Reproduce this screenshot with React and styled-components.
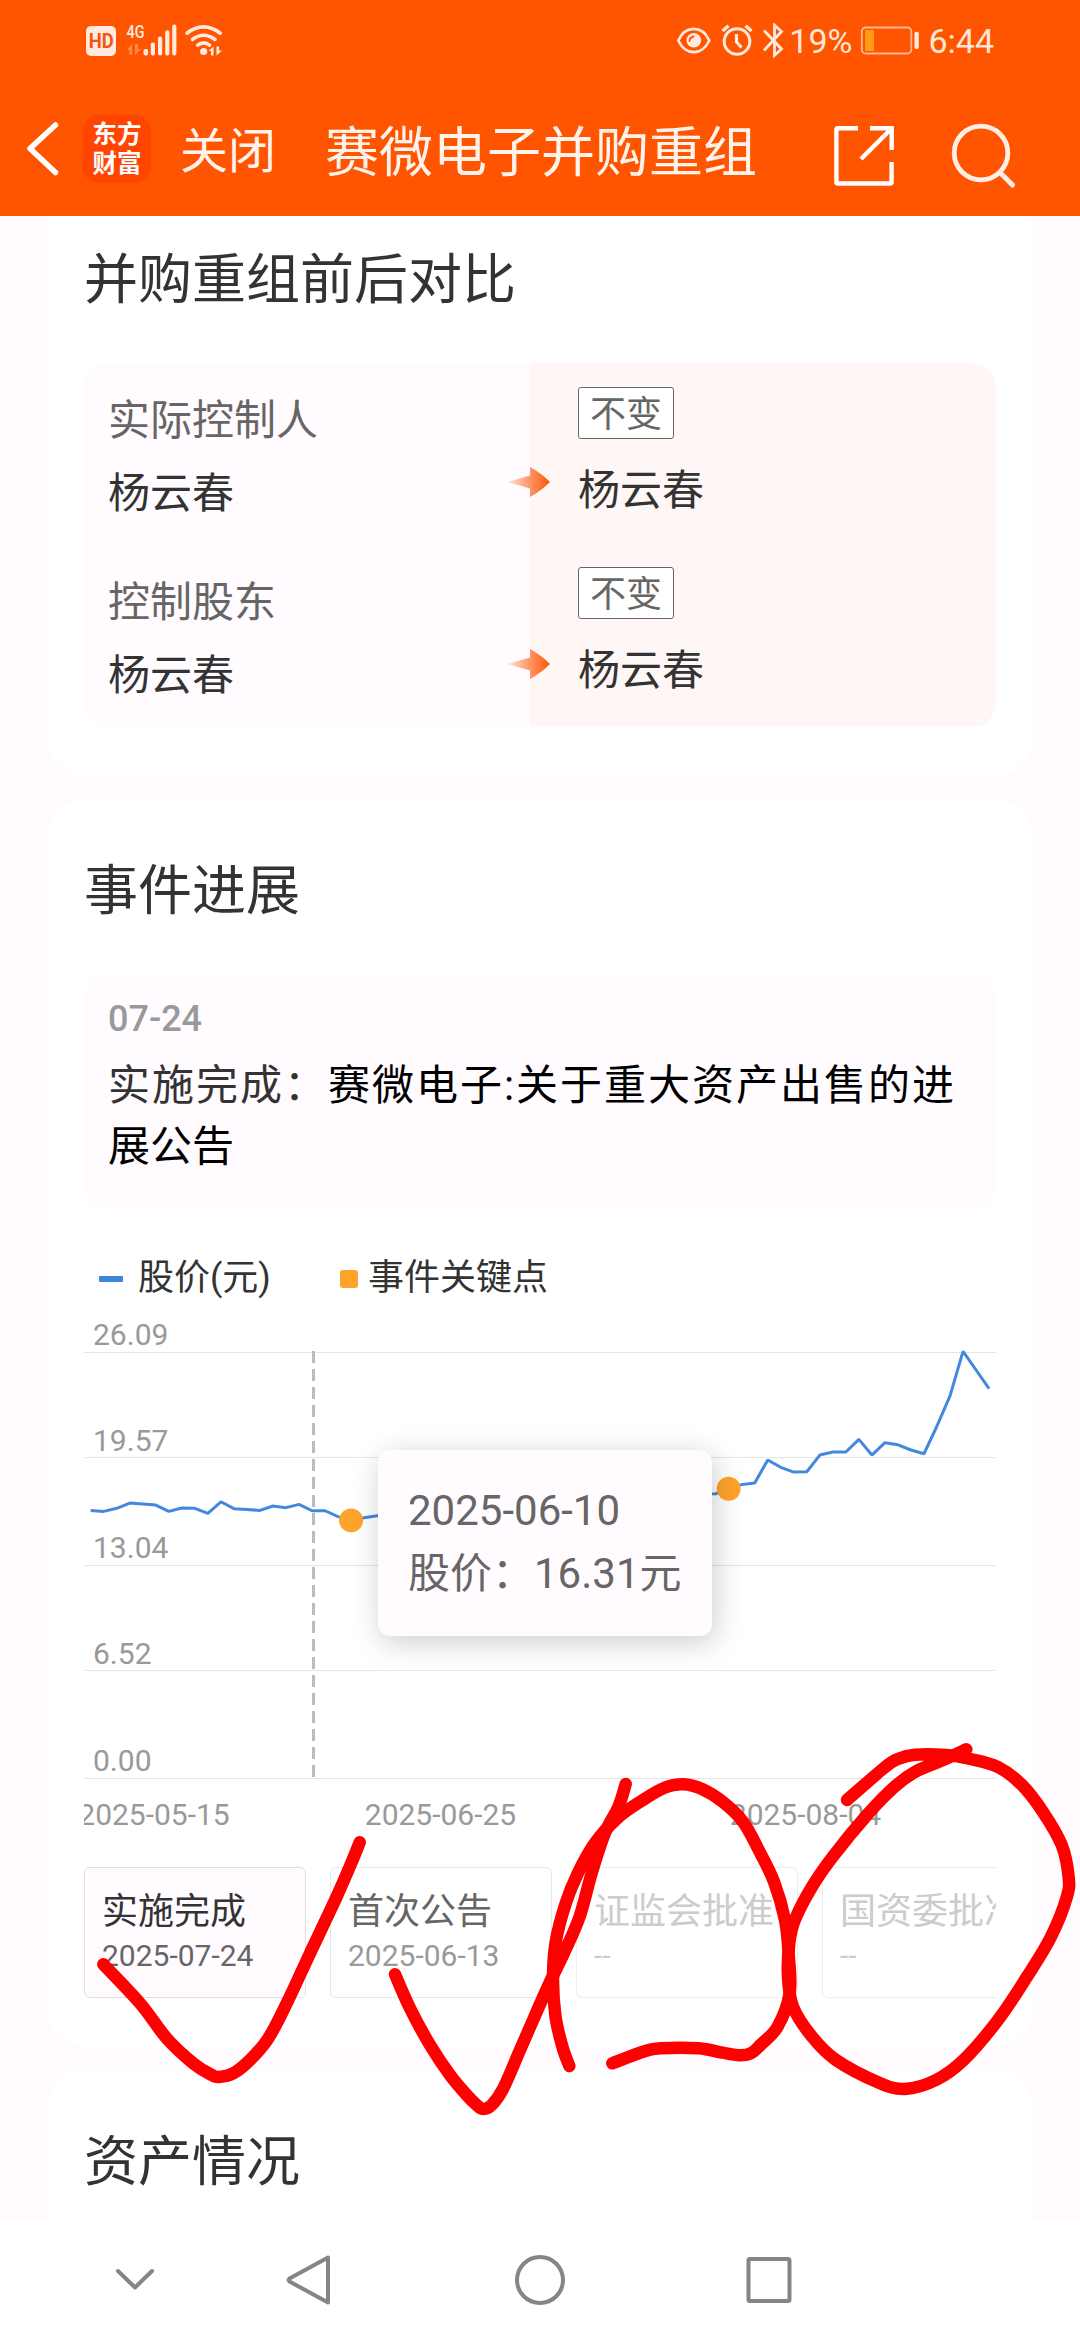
import React from "react";
import styled, { createGlobalStyle } from "styled-components";

// daily close, one entry per trading day from 05-15
const prices = [
  16.41, 16.35, 16.54, 16.86, 16.8, 16.74, 16.35, 16.56, 16.54, 16.23, 16.94,
  16.52, 16.47, 16.41, 16.68, 16.58, 16.78, 16.39, 16.39, 16.03, 15.8, 15.96,
  16.09, 16.2, 16.3, 16.25, 16.4, 16.5, 16.45, 16.6, 16.55, 16.7, 16.65, 16.8,
  16.75, 16.9, 16.85, 16.95, 17.0, 16.9, 17.05, 17.1, 17.0, 17.15, 17.2, 17.3,
  17.35, 17.4, 17.43, 17.74, 17.99, 18.09, 19.5, 19.05, 18.76, 18.78, 19.8,
  19.99, 19.99, 20.76, 19.8, 20.56, 20.43, 20.11, 19.88, 21.58, 23.42, 26.15,
  25.01, 23.87,
];

const keyPoints = [20, 49];

const gridLines = [
  { label: "26.09", y: 48.5, textY: 41 },
  { label: "19.57", y: 153.5, textY: 147 },
  { label: "13.04", y: 261.5, textY: 254 },
  { label: "6.52", y: 366.5, textY: 360 },
  { label: "0.00", y: 474.5, textY: 467 },
];

const dateTicks = [
  { label: "2025-05-15", x: 70 },
  { label: "2025-06-25", x: 356.5 },
  { label: "2025-08-04", x: 721.5 },
];

const compareRows = [
  { name: "实际控制人", before: "杨云春", after: "杨云春", tag: "不变" },
  { name: "控制股东", before: "杨云春", after: "杨云春", tag: "不变" },
];

const steps = [
  { name: "实施完成", date: "2025-07-24", state: "active" },
  { name: "首次公告", date: "2025-06-13", state: "done" },
  { name: "证监会批准", date: "--", state: "todo" },
  { name: "国资委批准", date: "--", state: "todo" },
];

// pen marks drawn by hand over the page
const penStrokes = [
  [[103.3, 1964.3], [140, 2003.3], [166.7, 2038.3], [193.3, 2063.3], [211.7, 2075], [219, 2077], [233.3, 2073.3], [250, 2060], [268.3, 2038.3], [286.7, 2003.3], [310, 1953.3], [336.7, 1896.7], [353.3, 1858.3], [359.7, 1842.3]],
  [[395, 1974.3], [410, 2008.3], [430, 2045], [450, 2075], [466.7, 2095], [476.7, 2105], [483.3, 2109], [491.7, 2105], [503.3, 2088.3], [520, 2050], [536.7, 2011.7], [550, 1982], [564, 1953], [579.6, 1916.7], [591.7, 1873], [605, 1833], [618.5, 1806.7], [625.7, 1784]],
  [[569.3, 2066], [562.4, 2046.7], [555.5, 2016.7], [553, 1980], [555.5, 1943], [565.8, 1903], [578, 1873], [595, 1843], [617.5, 1818], [643, 1800], [664, 1788], [683, 1784.3], [702, 1789], [722.5, 1801.7], [743, 1821.7], [758.7, 1850], [774, 1881.7], [785, 1920], [788.6, 1953], [789.7, 1993], [777.6, 2026.7], [760.4, 2045], [751.8, 2052.7], [740.8, 2055.3], [722.5, 2052.7], [698.4, 2048.3], [660.5, 2048.3], [643, 2051.7], [612.3, 2063.3]],
  [[847, 1800], [884, 1768], [898, 1759], [915, 1754.7], [946, 1755], [970.4, 1759], [998, 1767], [1022, 1785], [1042.8, 1811.7], [1061.7, 1845], [1068.6, 1876.7], [1066.9, 1896.7], [1051, 1936.7], [1027, 1976.7], [998, 2020], [963.6, 2060], [936, 2080], [905, 2089], [879, 2082.7], [836, 2060], [812, 2036.7], [793, 2006.7], [788, 1976.7], [789.3, 1943.3], [794.8, 1920], [812, 1886.7], [832.7, 1856.7], [867, 1815], [894.7, 1786.7], [915.3, 1771.7], [943, 1760], [966.3, 1749.3]],
];

const priceX = (i) => 6.7 + i * 13.02;
const priceY = (price) => 474.4 - price * 16.33;

// Catmull-Rom through every point
const smoothPath = (pts) => {
  let d = `M${pts[0][0]} ${pts[0][1]}`;
  for (let i = 0; i < pts.length - 1; i++) {
    const p0 = pts[i - 1] || pts[i];
    const p1 = pts[i];
    const p2 = pts[i + 1];
    const p3 = pts[i + 2] || p2;
    d += ` C${p1[0] + (p2[0] - p0[0]) / 6} ${p1[1] + (p2[1] - p0[1]) / 6}`;
    d += ` ${p2[0] - (p3[0] - p1[0]) / 6} ${p2[1] - (p3[1] - p1[1]) / 6}`;
    d += ` ${p2[0]} ${p2[1]}`;
  }
  return d;
};

const StatusIcons = () => (
  <svg width="142" height="52" viewBox="83 15 142 52" fill="#ffeadd">
    <rect x="86" y="26" width="30" height="30" rx="5" />
    <text x="88.8" y="48" fontFamily="Roboto" fontWeight="700" fontSize="20" textLength="25" lengthAdjust="spacingAndGlyphs" fill="#f0560f">HD</text>
    <text x="126.5" y="38.3" fontFamily="Roboto" fontWeight="500" fontSize="19" textLength="18" lengthAdjust="spacingAndGlyphs">4G</text>
    <path d="M127 50l5-6v11h-2.500v-5zM135 44v11l6-6h-3v-5z" opacity=".35" />
    <rect x="143.500" y="49" width="4.600" height="6.500" rx="2" />
    <rect x="150.800" y="42.500" width="4.200" height="13" rx="2" />
    <rect x="158" y="36.500" width="4.200" height="19" rx="2" />
    <rect x="165.200" y="30.300" width="4.200" height="25.200" rx="2" />
    <rect x="172.200" y="24.500" width="4.200" height="31" rx="2" />
    <g fill="none" stroke="#ffeadd" strokeWidth="3.600" strokeLinecap="round">
      <path d="M187 33.200q16.500-12.500 33.300 0" />
      <path d="M192.300 39.500q11.300-8.500 22.700 0" />
      <path d="M197.600 45.200q6-4.500 12 0" />
    </g>
    <circle cx="203.700" cy="51.500" r="3.600" />
    <path d="M208.500 51l5-4.500v9h-2.500v-4.500zM216.500 46.500v9l5.500-5h-3v-4z" />
  </svg>
);

const EyeIcon = () => (
  <svg width="34" height="36" viewBox="678 23 34 36" fill="none" stroke="#ffeadd" strokeWidth="2.600">
    <path d="M679.300 40.500c7-15.500 24-15.500 31 0c-7 15.500-24 15.500-31 0z" strokeLinejoin="round" />
    <circle cx="694.800" cy="40.300" r="7.300" fill="#ffeadd" stroke="none" />
    <path d="M690.500 41a5 5 0 0 1 4-4.500" stroke="#ff5500" strokeWidth="1.800" strokeLinecap="round" />
  </svg>
);

const AlarmIcon = () => (
  <svg width="35" height="36" viewBox="720 23 35 36" fill="none" stroke="#ffeadd" strokeWidth="3">
    <circle cx="738" cy="41.500" r="12.800" />
    <path d="M737.500 34v8l5 5.500" strokeWidth="3.200" />
    <path d="M723.500 31l6-5.200M752.500 31l-6-5.200" strokeWidth="3.400" />
  </svg>
);

const BluetoothIcon = () => (
  <svg width="22" height="36" viewBox="763 23 22 36" fill="none" stroke="#ffeadd" strokeWidth="2.800">
    <path d="M765 30.500l17.500 18.500-7 6.300V25.200l7 6.300L765 50.500" />
  </svg>
);

const BatteryIcon = () => (
  <svg width="60" height="30" viewBox="861 26 60 30">
    <rect x="862.800" y="27.500" width="49.500" height="26" rx="4" fill="none" stroke="#ffb893" strokeWidth="1.800" />
    <rect x="866" y="30" width="9" height="21" rx="1" fill="#ff9b17" />
    <rect x="915.500" y="31.700" width="4.300" height="17.300" rx="1.800" fill="#ffeadd" />
  </svg>
);

const BackIcon = () => (
  <svg width="34" height="58" viewBox="26 120 34 58" fill="none" stroke="#fff" strokeWidth="5.500" strokeLinecap="round" strokeLinejoin="round">
    <path d="M55.500 125L30 148.500L55.500 172.500" />
  </svg>
);

const ShareIcon = () => (
  <svg width="60" height="60" viewBox="834 126 60 60" fill="none" stroke="#fff" strokeWidth="4.400">
    <path d="M858 128.300H838q-1.600 0-1.600 1.600v52q0 1.600 1.600 1.600h52q1.600 0 1.600-1.600V162" />
    <path d="M870 128.300H891.700V150M891 129L861 159" />
  </svg>
);

const SearchIcon = () => (
  <svg width="66" height="66" viewBox="951 123 66 66" fill="none" stroke="#ffeee4" strokeWidth="4.800" strokeLinecap="round">
    <circle cx="981" cy="153" r="26.800" />
    <path d="M1000.500 173l12 12" strokeWidth="5" />
  </svg>
);

const ArrowIcon = () => (
  <svg width="43" height="32" viewBox="0 0 43 32">
    <defs>
      <linearGradient id="arrowFade" x1="0" x2="1" y1="0" y2="0">
        <stop offset="0" stopColor="#ff6b1a" stopOpacity="0.100" />
        <stop offset="0.550" stopColor="#ff7a3d" stopOpacity="0.800" />
        <stop offset="1" stopColor="#ff5500" />
      </linearGradient>
    </defs>
    <path d="M0 16L23 9.500V1Q34 7 43 16Q34 25 23 31V22.500z" fill="url(#arrowFade)" />
  </svg>
);

const PriceChart = () => (
  <ChartSvg viewBox="0 0 912 536">
    {gridLines.map((line) => (
      <g key={line.label}>
        <path d={`M0 ${line.y}H912`} stroke="#e5e4e7" strokeWidth="1" />
        <text x="9" y={line.textY}>{line.label}</text>
      </g>
    ))}
    {dateTicks.map((tick) => (
      <text key={tick.label} x={tick.x} y="521" textAnchor="middle">{tick.label}</text>
    ))}
    <polyline
      points={prices.map((p, i) => `${priceX(i)},${priceY(p)}`).join(" ")}
      fill="none"
      stroke="#4388dc"
      strokeWidth="3"
      strokeLinejoin="bevel"
    />
    <path d="M229.500 47V474" stroke="#bdbcc6" strokeWidth="3" strokeDasharray="12 6" />
    {keyPoints.map((i) => (
      <circle key={i} cx={priceX(i)} cy={priceY(prices[i])} r="12" fill="#ffa42b" />
    ))}
  </ChartSvg>
);

export const App = () => {
  return (
    <Screen>
      <GlobalStyle />
      <Header>
        <StatusBar>
          <StatusIcons />
          <StatusRight>
            <EyeIcon />
            <AlarmIcon />
            <BluetoothIcon />
            <StatusText $tight>19%</StatusText>
            <BatteryIcon />
            <StatusText>6:44</StatusText>
          </StatusRight>
        </StatusBar>
        <TitleBar>
          <BackIcon />
          <Logo>
            <span>东方</span>
            <span>财富</span>
          </Logo>
          <Close>关闭</Close>
          <Title>赛微电子并购重组</Title>
          <Actions>
            <ShareIcon />
            <SearchIcon />
          </Actions>
        </TitleBar>
      </Header>

      <Content>
        <Card $first>
          <Heading>并购重组前后对比</Heading>
          <Compare>
            <Before>
              {compareRows.map((row) => (
                <BeforeRow key={row.name}>
                  <FieldName>{row.name}</FieldName>
                  <Person>{row.before}</Person>
                  <ArrowHolder>
                    <ArrowIcon />
                  </ArrowHolder>
                </BeforeRow>
              ))}
            </Before>
            <After>
              {compareRows.map((row) => (
                <AfterRow key={row.name}>
                  <Tag>{row.tag}</Tag>
                  <Person>{row.after}</Person>
                </AfterRow>
              ))}
            </After>
          </Compare>
        </Card>

        <Card>
          <Heading>事件进展</Heading>
          <EventBox>
            <EventDate>07-24</EventDate>
            <EventText>
              <EventState>实施完成：</EventState>赛微电子:关于重大资产出售的进展公告
            </EventText>
          </EventBox>
          <Legend>
            <LineMark />
            <LegendText $width="202px">股价(元)</LegendText>
            <SquareMark />
            <LegendText>事件关键点</LegendText>
          </Legend>
          <ChartWrap>
            <PriceChart />
            <Tooltip>
              <div>2025-06-10</div>
              <div>股价：16.31元</div>
            </Tooltip>
          </ChartWrap>
          <Steps>
            {steps.map((step) => (
              <Step key={step.name} $state={step.state}>
                <StepName $state={step.state}>{step.name}</StepName>
                <StepDate $state={step.state}>{step.date}</StepDate>
              </Step>
            ))}
          </Steps>
        </Card>

        <Card>
          <Heading>资产情况</Heading>
        </Card>
      </Content>

      <NavKeys>
        <svg width="44" height="52" viewBox="113 2254 44 52">
          <path d="M118 2271l17 16.500l17-16.500" />
        </svg>
        <svg width="48" height="52" viewBox="285 2254 48 52">
          <path d="M328 2257.500V2302.500L289.500 2281.500Q288 2280 289.500 2278.500z" />
        </svg>
        <svg width="52" height="52" viewBox="514 2254 52 52">
          <circle cx="540" cy="2280" r="23" />
        </svg>
        <svg width="48" height="52" viewBox="745 2254 48 52">
          <rect x="748.500" y="2259" width="41" height="42" rx="1.500" />
        </svg>
      </NavKeys>

      <PenLayer viewBox="0 0 1080 2340">
        {penStrokes.map((pts, i) => (
          <path key={i} d={smoothPath(pts)} />
        ))}
      </PenLayer>
    </Screen>
  );
};

const stepColors = {
  active: { border: "#e0dfe4", bg: "#fffbff", name: "#333333", date: "#666666" },
  done: { border: "#e8e7ea", bg: "#ffffff", name: "#666666", date: "#999999" },
  todo: { border: "#ececec", bg: "#ffffff", name: "#cccccc", date: "#cccccc" },
};

const GlobalStyle = createGlobalStyle`
  body {
    margin: 0;
    background: #ffffff;
    font-family: Roboto, "Noto Sans CJK SC", sans-serif;
  }

  svg {
    display: block;
    flex: none;
  }
`;

const Screen = styled.div`
  position: relative;
  display: flex;
  flex-direction: column;
  width: 1080px;
  height: 2340px;
  overflow: hidden;
`;

const Header = styled.header`
  height: 216px;
  background: #ff5500;
  color: #fff3ec;
`;

const StatusBar = styled.div`
  display: flex;
  justify-content: space-between;
  align-items: center;
  height: 82px;
  padding: 0 86px 0 83px;
`;

const StatusRight = styled.div`
  display: flex;
  align-items: center;
  gap: 8px;
`;

const StatusText = styled.span`
  margin-left: ${(p) => (p.$tight ? "-3px" : "0")};
  font-size: 34px;
  line-height: 40px;
  color: #ffe6d6;
`;

const TitleBar = styled.div`
  display: flex;
  align-items: center;
  height: 134px;
  padding-left: 26px;
`;

const Logo = styled.div`
  display: flex;
  flex-direction: column;
  align-items: center;
  justify-content: center;
  width: 68px;
  height: 68px;
  margin-left: 23px;
  border-radius: 16px;
  background: #ff4500;
  color: #ffffff;
  font-size: 24.5px;
  font-weight: 700;
  line-height: 29px;
`;

const Close = styled.span`
  width: 96px;
  margin: 5px 0 0 29px;
  font-size: 48px;
  line-height: 60px;
`;

const Title = styled.h1`
  margin: 10px 0 0 49px;
  font-size: 54px;
  font-weight: 400;
  line-height: 70px;
  white-space: nowrap;
`;

const Actions = styled.div`
  display: flex;
  align-items: center;
  gap: 57px;
  margin: 14px 0 0 77px;
`;

const Content = styled.main`
  height: 2004px;
  padding: 0 48px;
  background: #fffbff;
  overflow: hidden;
`;

const Card = styled.section`
  padding: ${(p) => (p.$first ? "25px 36px 48px" : "53px 36px 48px")};
  margin-bottom: 24px;
  background: #ffffff;
  border-radius: ${(p) => (p.$first ? "0 0 36px 36px" : "36px")};
`;

const Heading = styled.h2`
  margin: 0 0 42px;
  font-size: 54px;
  font-weight: 400;
  line-height: 80px;
  color: #333333;
`;

const Compare = styled.div`
  display: flex;
  height: 364px;
  border-radius: 24px;
  overflow: hidden;
`;

const Before = styled.div`
  width: 446px;
  background: #fffbff;
`;

const After = styled.div`
  flex: 1;
  background: #fff6f6;
`;

const BeforeRow = styled.div`
  position: relative;
  box-sizing: border-box;
  height: 182px;
  padding: 28px 0 0 24px;
`;

const AfterRow = styled.div`
  box-sizing: border-box;
  height: 180px;
  padding: 24px 0 0 48px;
`;

const FieldName = styled.div`
  margin-bottom: 13px;
  font-size: 42px;
  line-height: 60px;
  color: #666666;
`;

const Person = styled.div`
  font-size: 42px;
  line-height: 60px;
  color: #333333;
`;

const ArrowHolder = styled.div`
  position: absolute;
  top: 103px;
  right: -20px;
`;

const Tag = styled.div`
  box-sizing: border-box;
  width: 96px;
  height: 52px;
  margin-bottom: 22px;
  border: 1.5px solid #666666;
  border-radius: 3px;
  background: #ffffff;
  font-size: 36px;
  line-height: 54px;
  text-align: center;
  color: #666666;
`;

const EventBox = styled.div`
  box-sizing: border-box;
  height: 235px;
  padding: 20px 42px 0 24px;
  border-radius: 24px;
  background: #fffbff;
`;

const EventDate = styled.div`
  margin-bottom: 11px;
  font-size: 36px;
  font-weight: 500;
  line-height: 50px;
  color: #999999;
`;

const EventText = styled.p`
  margin: 0;
  font-size: 42px;
  line-height: 61px;
  text-align: justify;
  color: #000000;
`;

const EventState = styled.span`
  color: #333333;
`;

const Legend = styled.div`
  display: flex;
  align-items: center;
  height: 50px;
  margin-top: 45px;
  padding-left: 15px;
`;

const LineMark = styled.i`
  width: 24px;
  height: 6px;
  margin-right: 15px;
  border-radius: 1px;
  background: #3f85dd;
`;

const SquareMark = styled.i`
  width: 18px;
  height: 18px;
  margin-right: 10px;
  border-radius: 3px;
  background: #ffa42b;
`;

const LegendText = styled.span`
  width: ${(p) => p.$width || "auto"};
  margin-top: -2px;
  font-size: 36px;
  line-height: 50px;
  color: #333333;
`;

const ChartWrap = styled.div`
  position: relative;
  height: 536px;
`;

const ChartSvg = styled.svg`
  width: 912px;
  height: 536px;

  text {
    font-family: Roboto, sans-serif;
    font-size: 30px;
    fill: #999999;
  }
`;

const Tooltip = styled.div`
  position: absolute;
  left: 294px;
  top: 146px;
  box-sizing: border-box;
  width: 334px;
  height: 186px;
  padding: 29px 30px;
  border-radius: 12px;
  background: #fffbff;
  box-shadow: 3px 6px 30px rgba(0, 0, 0, 0.2);
  font-size: 42px;
  line-height: 63px;
  white-space: nowrap;
  color: #666666;
`;

const Steps = styled.div`
  display: flex;
  gap: 24px;
  margin-top: 27px;
  overflow: hidden;
`;

const Step = styled.div`
  flex: none;
  box-sizing: border-box;
  width: 222px;
  height: 131px;
  padding: 21px 0 0 17px;
  border: 1px solid ${(p) => stepColors[p.$state].border};
  border-radius: 6px;
  background: ${(p) => stepColors[p.$state].bg};
  overflow: hidden;
`;

const StepName = styled.div`
  font-size: 36px;
  line-height: 46px;
  white-space: nowrap;
  color: ${(p) => stepColors[p.$state].name};
`;

const StepDate = styled.div`
  font-size: 30px;
  line-height: 42px;
  color: ${(p) => stepColors[p.$state].date};
`;

const NavKeys = styled.nav`
  display: grid;
  grid-template-columns: 172px 229px 231px 48px;
  align-items: center;
  height: 120px;
  padding-left: 113px;
  background: #ffffff;

  svg {
    fill: none;
    stroke: #858585;
    stroke-width: 4px;
    stroke-linejoin: round;
    stroke-linecap: round;
  }
`;

const PenLayer = styled.svg`
  position: absolute;
  top: 0;
  left: 0;
  width: 1080px;
  height: 2340px;
  pointer-events: none;

  path {
    fill: none;
    stroke: #ff0000;
    stroke-width: 12.5px;
    stroke-linecap: round;
    stroke-linejoin: round;
  }
`;

export default App;
